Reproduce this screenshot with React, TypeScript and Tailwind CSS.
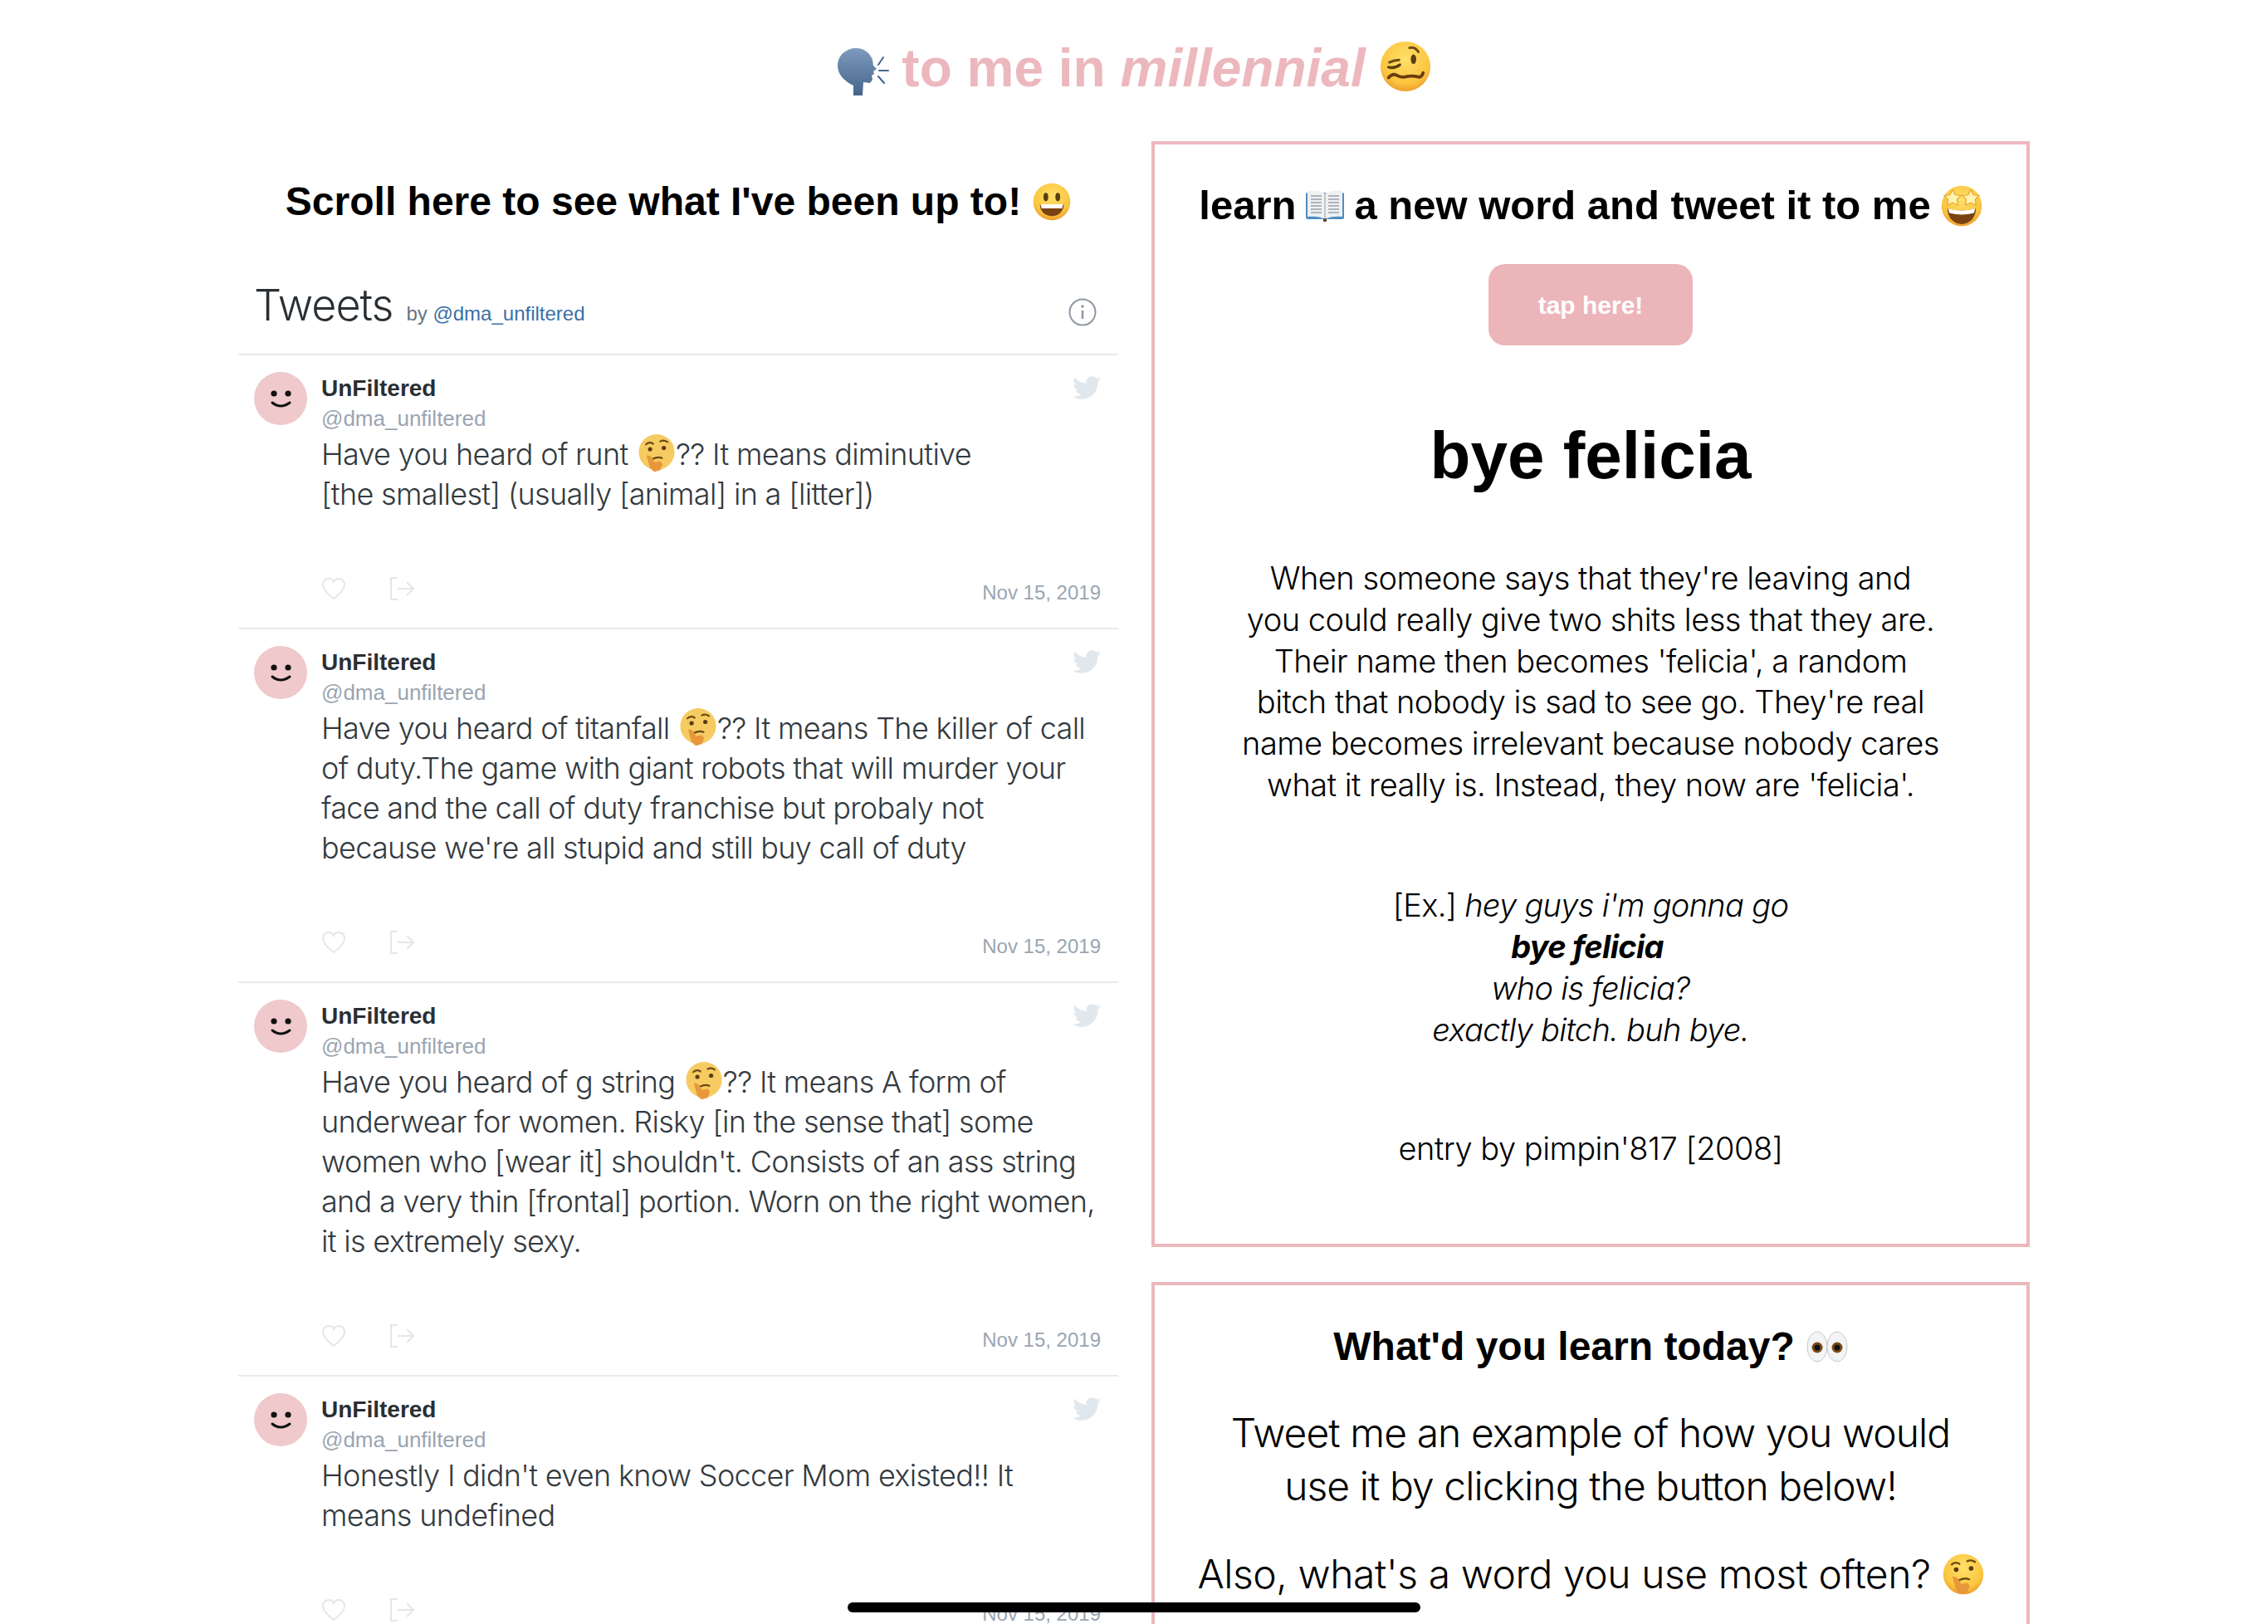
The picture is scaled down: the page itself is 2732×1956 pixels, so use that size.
import React from "react";
import { FaTwitter } from "react-icons/fa";

const Svg = ({ s, className = "", children }: { s: number; className?: string; children: React.ReactNode }) => (
  <svg width={s} height={s} viewBox="0 0 64 64" className={"inline-block align-middle " + className}>
    {children}
  </svg>
);

const Face = ({ id }: { id: string }) => (
  <>
    <defs>
      <radialGradient id={id} cx="50%" cy="35%" r="70%">
        <stop offset="0%" stopColor="#ffe06a" />
        <stop offset="70%" stopColor="#fbc53f" />
        <stop offset="100%" stopColor="#e9932a" />
      </radialGradient>
    </defs>
    <circle cx="32" cy="32" r="31" fill={`url(#${id})`} />
  </>
);

const Thinking = ({ s = 46, flat = false, id, className = "" }: { s?: number; flat?: boolean; id: string; className?: string }) => (
  <Svg s={s} className={className}>
    {flat ? <circle cx="32" cy="30" r="30" fill="#f5cb62" /> : <Face id={id} />}
    <path d="M14 17q6-5 12-1M38 12q6-3 12 1" stroke="#6b4a12" strokeWidth="3" fill="none" strokeLinecap="round" />
    <circle cx="21" cy="25" r="3.6" fill="#5a3d10" />
    <circle cx="44" cy="23" r="3.6" fill="#5a3d10" />
    <path d="M26 41q8-4 15-1" stroke="#6b4a12" strokeWidth="3" fill="none" strokeLinecap="round" />
    <path d="M15 35l7 2 7 10 9-2 4 5-4 10-10 3-7-6-4-14z" fill="#e8983a" />
  </Svg>
);

const Speaking = () => (
  <svg width="64" height="58" viewBox="0 0 64 58" className="mt-[13px] inline-block align-middle">
    <defs>
      <linearGradient id="sp" x1="0" y1="0" x2="0" y2="1">
        <stop offset="0%" stopColor="#7c9bbd" />
        <stop offset="100%" stopColor="#45648a" />
      </linearGradient>
    </defs>
    <path d="M20 58V46C8 40 1 32 1 22 1 9 12 1 23 1c10 0 17 6 20 14l1 7 4 4-4 3 1 3-3 2 1 5-3 4-8-1-1 16z" fill="url(#sp)" />
    <path d="M50 21l6-9M51 28h11M50 35l7 8" stroke="#45648a" strokeWidth="2" strokeLinecap="round" />
  </svg>
);

const Woozy = () => (
  <Svg s={62} className="mt-[5px] ml-[3px]">
    <Face id="wz" />
    <path d="M37 9q7-2 11 5M12 27q6-3 12-3" stroke="#6b4a12" strokeWidth="3" fill="none" strokeLinecap="round" />
    <ellipse cx="42" cy="23" rx="3.4" ry="6" fill="#5a3d10" />
    <path d="M11 33q7 2 14-3" stroke="#5a3d10" strokeWidth="3.4" fill="none" strokeLinecap="round" />
    <path d="M11 46q5-6 10-3t10 2 9-1 8 1 6-5" stroke="#6b3d10" strokeWidth="4" fill="none" strokeLinecap="round" />
  </Svg>
);

const Grin = () => (
  <Svg s={46}>
    <Face id="gr" />
    <ellipse cx="22" cy="24" rx="4" ry="7" fill="#5a3d10" />
    <ellipse cx="42" cy="24" rx="4" ry="7" fill="#5a3d10" />
    <path d="M12 36h40c0 12-9 20-20 20s-20-8-20-20z" fill="#7a4312" />
    <path d="M13 36h38l-2 7H15z" fill="#fff" />
  </Svg>
);

const Book = () => (
  <svg width="46" height="38" viewBox="0 0 46 38" className="inline-block align-middle">
    <rect x="0" y="3" width="46" height="32" rx="2" fill="#4f8dc0" />
    <path d="M2 1c8-1 16 0 21 3 5-3 13-4 21-3v31c-8-1-16 0-21 3-5-3-13-4-21-3z" fill="#eef0f2" />
    <path d="M6 7h13M6 11h13M6 15h13M6 19h13M6 23h13M6 27h13M27 7h13M27 11h13M27 15h13M27 19h13M27 23h13M27 27h13" stroke="#9aa0a8" strokeWidth="1.4" />
    <rect x="21" y="34" width="4" height="4" fill="#5b4a3a" />
    <path d="M23 4v31" stroke="#9aa0a8" strokeWidth="1" />
  </svg>
);

const Star = ({ cx, cy }: { cx: number; cy: number }) => (
  <path
    transform={`translate(${cx} ${cy})`}
    d="M0-13l4 8 9 1-6 6 1 9-8-4-8 4 1-9-6-6 9-1z"
    fill="#fff3b0"
    stroke="#e8a52e"
    strokeWidth="1.5"
  />
);

const StarStruck = () => (
  <Svg s={50}>
    <Face id="st" />
    <Star cx={18} cy={20} />
    <Star cx={46} cy={20} />
    <path d="M10 36q22 6 44 0c0 14-10 24-22 24S10 50 10 36z" fill="#7a4312" />
    <path d="M11 36q21 6 42 0l-2 7q-19 5-38 0z" fill="#fff" />
  </Svg>
);

const Eyes = () => (
  <svg width="50" height="38" viewBox="0 0 50 38" className="inline-block align-middle">
    <ellipse cx="13" cy="19" rx="12" ry="18" fill="#f4f4f4" stroke="#c8c8c8" />
    <ellipse cx="37" cy="19" rx="12" ry="18" fill="#f4f4f4" stroke="#c8c8c8" />
    <circle cx="13" cy="20" r="6.5" fill="#7c4a18" />
    <circle cx="37" cy="20" r="6.5" fill="#7c4a18" />
    <circle cx="13" cy="20" r="3.5" fill="#111" />
    <circle cx="37" cy="20" r="3.5" fill="#111" />
  </svg>
);

const Avatar = () => (
  <svg width="64" height="64" viewBox="0 0 64 64" className="shrink-0">
    <circle cx="32" cy="32" r="32" fill="#efc9cb" />
    <circle cx="24" cy="26" r="3.6" fill="#111" />
    <circle cx="41" cy="26" r="3.6" fill="#111" />
    <path d="M22 37q10 8 21 0" stroke="#111" strokeWidth="3" fill="none" strokeLinecap="round" />
  </svg>
);

const Heart = () => (
  <svg width="30" height="30" viewBox="0 0 30 30" fill="none" stroke="#e3e6ea" strokeWidth="2">
    <path d="M15 27C7 21 2 16 2 10c0-4 3-7 7-7 3 0 5 1.500 6 4 1-2.500 3-4 6-4 4 0 7 3 7 7 0 6-5 11-13 17z" />
  </svg>
);

const Share = () => (
  <svg width="30" height="30" viewBox="0 0 30 30" fill="none" stroke="#e3e6ea" strokeWidth="2">
    <path d="M10 2H2v26h8M10 15h19M21 7l8 8-8 8" />
  </svg>
);

const Info = () => (
  <svg width="34" height="34" viewBox="0 0 34 34" fill="none" stroke="#8d98a3" strokeWidth="2" className="mt-[16px]">
    <circle cx="17" cy="17" r="15.500" />
    <path d="M17 15v10" strokeWidth="2.500" />
    <circle cx="17" cy="10" r="1.800" fill="#8d98a3" stroke="none" />
  </svg>
);

const Tweet = ({ children }: { children: React.ReactNode }) => (
  <div className="flex gap-[17px] border-b-2 border-[#e8eaec] pt-[20px] pl-[19px] pr-[21px] pb-[24px]">
    <Avatar />
    <div className="flex-1 relative">
      <FaTwitter className="absolute right-0 top-[2px] text-[#e1e8ed]" size={34} />
      <div className="mt-[2px] font-['Liberation_Sans',sans-serif] text-[28px] font-bold leading-[36px] text-[#292f33]">UnFiltered</div>
      <div className="font-['Liberation_Sans',sans-serif] text-[26px] leading-[36px] text-[#9aa5b1]">@dma_unfiltered</div>
      <div className="mt-[1px] min-h-[96px] whitespace-nowrap text-[36px] leading-[48px] tracking-[-0.68px] text-[#333a40] font-light">{children}</div>
      <div className="mt-[77px] flex items-center justify-between h-[36px]">
        <div className="flex gap-[52px] -mt-[10px]">
          <Heart />
          <Share />
        </div>
        <div className="font-['Liberation_Sans',sans-serif] text-[24px] text-[#9aa5b1]">Nov 15, 2019</div>
      </div>
    </div>
  </div>
);

const think = "relative -top-[4px] -my-[10px] ml-[2px]";

export default function App() {
  return (
    <div className="relative h-[1956px] w-full overflow-hidden bg-white font-['Inter',sans-serif]">
      <h1 className="flex h-[170px] items-start justify-center gap-[14px] pt-[44px] font-['Liberation_Sans',sans-serif] text-[64px] font-bold leading-[76px] text-[#ecb8bd]">
        <Speaking />
        <span>
          to me in <em>millennial</em>
        </span>
        <Woozy />
      </h1>
      <div className="mx-auto grid w-[2158px] grid-cols-[1060px_1058px] gap-[40px]">
        <div>
          <h2 className="flex h-[146px] items-center justify-center gap-[14px] font-['Liberation_Sans',sans-serif] text-[48px] font-bold">
            Scroll here to see what I've been up to! <Grin />
          </h2>
          <div className="flex h-[112px] items-center gap-[16px] border-b-2 border-[#e8eaec] pl-[19px] pr-[26px] pb-[6px]">
            <span className="text-[52px] tracking-[-1px] font-light text-[#292f33]">Tweets</span>
            <span className="mt-[20px] flex-1 font-['Liberation_Sans',sans-serif] text-[24px] text-[#66757f]">
              by <span className="text-[#3b6fa5]">@dma_unfiltered</span>
            </span>
            <Info />
          </div>
          <Tweet>
            Have you heard of runt <Thinking id="t1" flat className={think} />?? It means diminutive
            <br />
            [the smallest] (usually [animal] in a [litter])
          </Tweet>
          <Tweet>
            Have you heard of titanfall <Thinking id="t2" flat className={think} />?? It means The killer of call
            <br />
            of duty.The game with giant robots that will murder your
            <br />
            face and the call of duty franchise but probaly not
            <br />
            because we're all stupid and still buy call of duty
          </Tweet>
          <Tweet>
            Have you heard of g string <Thinking id="t3" flat className={think} />?? It means A form of
            <br />
            underwear for women. Risky [in the sense that] some
            <br />
            women who [wear it] shouldn't. Consists of an ass string
            <br />
            and a very thin [frontal] portion. Worn on the right women,
            <br />
            it is extremely sexy.
          </Tweet>
          <Tweet>
            Honestly I didn't even know Soccer Mom existed!! It
            <br />
            means undefined
          </Tweet>
        </div>
        <div className="flex flex-col gap-[42px]">
          <section className="flex h-[1332px] flex-col items-center border-4 border-[#ebb8bd] text-black">
            <h2 className="mt-[46px] flex h-[56px] items-center gap-[12px] font-['Liberation_Sans',sans-serif] text-[49px] font-bold">
              learn <Book /> a new word and tweet it to me <StarStruck />
            </h2>
            <button className="mt-[42px] h-[98px] w-[246px] rounded-[20px] bg-[#ebb5ba] font-['Liberation_Sans',sans-serif] text-[30px] font-bold text-white">
              tap here!
            </button>
            <h3 className="mt-[83px] font-['Liberation_Sans',sans-serif] text-[80px] font-bold leading-[100px]">bye felicia</h3>
            <p className="mt-[73px] text-center text-[38px] leading-[49.800px] tracking-[-0.5px] font-light">
              When someone says that they're leaving and
              <br />
              you could really give two shits less that they are.
              <br />
              Their name then becomes 'felicia', a random
              <br />
              bitch that nobody is sad to see go. They're real
              <br />
              name becomes irrelevant because nobody cares
              <br />
              what it really is. Instead, they now are 'felicia'.
            </p>
            <p className="mt-[94px] text-center text-[38px] leading-[50px] tracking-[-0.7px] font-light">
              [Ex.] <em>hey guys i'm gonna go</em>
              <br />
              <em className="inline-block pr-[8px] font-bold">bye felicia</em>
              <br />
              <em>who is felicia?</em>
              <br />
              <em>exactly bitch. buh bye.</em>
            </p>
            <p className="mt-[93px] text-center text-[38px] leading-[50px] tracking-[-0.5px] font-light">entry by pimpin'817 [2008]</p>
          </section>
          <section className="flex flex-col items-center border-4 border-b-0 border-[#ebb8bd] text-black">
            <h2 className="mt-[46px] flex h-[56px] items-center gap-[14px] font-['Liberation_Sans',sans-serif] text-[48px] font-bold">
              What'd you learn today? <Eyes />
            </h2>
            <p className="mt-[44px] text-center text-[48px] leading-[64px] tracking-[-0.94px] font-light">
              Tweet me an example of how you would
              <br />
              use it by clicking the button below!
            </p>
            <p className="mt-[42px] flex items-center gap-[14px] text-[48px] leading-[64px] tracking-[-0.45px] font-light">
              Also, what's a word you use most often? <Thinking id="t4" s={50} />
            </p>
            <div className="h-[120px]" />
          </section>
        </div>
      </div>
      <div className="absolute left-[1021px] top-[1930px] h-[12px] w-[690px] rounded-full bg-black" />
    </div>
  );
}
